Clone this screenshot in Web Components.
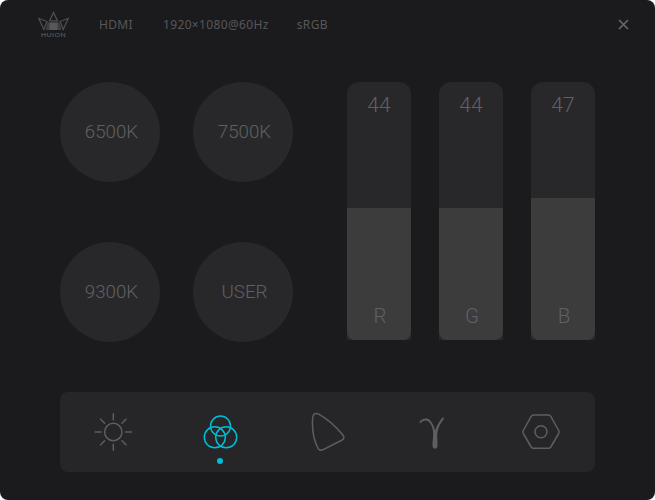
<!DOCTYPE html>
<html>
<head>
<meta charset="utf-8">
<style>
    html, body { margin: 0; padding: 0; background: #fff; }
</style>
</head>
<body>
<monitor-app></monitor-app>

<script>
class TopBar extends HTMLElement {
    constructor() {
        super();
        this.shadow = this.attachShadow({ mode: 'open' });
    }

    connectedCallback() {
        this.shadow.innerHTML = `
            <style>
                :host {
                    display: flex;
                    align-items: center;
                    height: 49px;
                    padding: 0 26px 0 38px;
                    font: 12px "Noto Sans", sans-serif;
                    letter-spacing: 0.35px;
                    color: #57575b;
                }
                svg.logo { width: 32px; height: 28px; margin-right: 29px; }
                span { margin-right: 30px; }
                span.last { margin-left: -2px; }
                svg.close { margin-left: auto; width: 11px; height: 11px; }
            </style>
            <svg class="logo" viewBox="0 0 32 28">
                <path d="M15.500 1.500 L11.500 9.800 H19.500 Z" fill="none" stroke="#505054" stroke-width="1.300"/>
                <path d="M0.800 7.500 L9 10.500 L5.800 18.500 Z M30.200 7.500 L22 10.500 L25.200 18.500 Z" fill="none" stroke="#505054" stroke-width="1.200"/>
                <path d="M9.500 11.500 H21.500 L23.500 19 H7.500 Z" fill="#3f3f43"/>
                <path d="M11.500 11.500 H19.500 V19 H11.500 Z" fill="#58585c"/>
                <text x="15.500" y="26" text-anchor="middle" font-family="'Liberation Sans'" font-size="5.500" fill="#66666a" textLength="25" lengthAdjust="spacingAndGlyphs">HUION</text>
            </svg>
            <span>HDMI</span>
            <span>1920×1080@60Hz</span>
            <span class="last">sRGB</span>
            <svg class="close" viewBox="0 0 11 11">
                <path d="M1 1 L10 10 M10 1 L1 10" stroke="#68686c" stroke-width="1.600"/>
            </svg>
        `;
    }
}

class PresetButton extends HTMLElement {
    constructor() {
        super();
        this.shadow = this.attachShadow({ mode: 'open' });
    }

    connectedCallback() {
        this.shadow.innerHTML = `
            <style>
                :host {
                    display: flex;
                    align-items: center;
                    justify-content: center;
                    width: 100px;
                    height: 100px;
                    padding-left: 3px;
                    box-sizing: border-box;
                    border-radius: 50%;
                    background: #28282a;
                    font: 300 18.700px "Roboto", sans-serif;
                    color: #606064;
                }
            </style>
            <slot></slot>
        `;
    }
}

class ChannelBar extends HTMLElement {
    constructor() {
        super();
        this.shadow = this.attachShadow({ mode: 'open' });
    }

    connectedCallback() {
        const fill = this.getAttribute('fill');
        const value = this.getAttribute('value');
        const name = this.getAttribute('name');
        this.shadow.innerHTML = `
            <style>
                :host {
                    display: flex;
                    flex-direction: column;
                    justify-content: flex-end;
                    position: relative;
                    width: 64px;
                    height: 258px;
                    border-radius: 12px 12px 0 0;
                    background: #28282a;
                    font: 300 21px "Roboto", sans-serif;
                    color: #606064;
                }
                .value {
                    position: absolute;
                    top: 11px;
                    left: 0;
                    right: 0;
                    text-align: center;
                    line-height: 25px;
                }
                .fill {
                    display: flex;
                    align-items: flex-end;
                    justify-content: center;
                    height: ${fill}px;
                    padding: 0 0 11px 2px;
                    box-sizing: border-box;
                    background: #3c3c3c;
                    border-radius: 0 0 8px 8px;
                    line-height: 25px;
                    font-size: 20.500px;
                }
            </style>
            <div class="value">${value}</div>
            <div class="fill">${name}</div>
        `;
    }
}

class NavBar extends HTMLElement {
    constructor() {
        super();
        this.shadow = this.attachShadow({ mode: 'open' });
    }

    connectedCallback() {
        this.shadow.innerHTML = `
            <style>
                :host {
                    display: grid;
                    grid-template-columns: repeat(5, 1fr);
                    width: 535px;
                    height: 80px;
                    box-sizing: border-box;
                    border-radius: 8px;
                    background: #262628;
                }
                .item {
                    position: relative;
                    display: flex;
                    align-items: center;
                    justify-content: center;
                }
                .dot {
                    position: absolute;
                    left: 50%;
                    top: 66px;
                    width: 6px;
                    height: 6px;
                    margin-left: -3.500px;
                    border-radius: 50%;
                    background: #00bcd4;
                }
                svg { width: 44px; height: 44px; fill: none; stroke: #5e5e62; stroke-width: 1.500; stroke-linecap: round; stroke-linejoin: round; }
                svg.on { stroke: #00bcd4; }
            </style>
            <div class="item">
                <svg viewBox="0 0 44 44">
                    <g transform="translate(-0.700 0)">
                        <circle cx="22" cy="22" r="8.700"/>
                        <path d="M22 3.800 V9.700 M22 34.300 V40.200 M3.800 22 H9.700 M34.300 22 H40.200 M9.300 9.300 L13.300 13.300 M30.700 30.700 L34.700 34.700 M9.300 34.700 L13.300 30.700 M30.700 13.300 L34.700 9.300"/>
                    </g>
                </svg>
            </div>
            <div class="item">
                <svg class="on" viewBox="0 0 44 44">
                    <circle cx="21.500" cy="16" r="10"/>
                    <circle cx="15.800" cy="27.300" r="10.500"/>
                    <circle cx="27.200" cy="27.300" r="10.500"/>
                </svg>
                <div class="dot"></div>
            </div>
            <div class="item">
                <svg viewBox="0 0 44 44">
                    <path transform="translate(-1.300 0)" d="M9.500 4.200 C7.800 5.500 7.500 9 7.800 15 C8 25 11 34 13.500 38.500 C14.500 40.500 16.500 40.500 18 39.800 L37.500 30 C39.800 29 39.500 26.500 38 24.800 C31 16.500 21 8 14 4.200 C12.500 3.200 10.800 3.200 9.500 4.200 Z"/>
                </svg>
            </div>
            <div class="item">
                <svg viewBox="0 0 44 44">
                    <path style="fill:#5e5e62;stroke:none" d="M6.300 12.200 C9 8.300 14 7.300 17.300 10.500 C19.800 13 21.300 17 22 20.500 C23.800 15.500 26.300 11 30 7 L31 8.800 C27.500 12.800 25 18 24.200 24 C24 28 24.800 32 24.500 36 C24.300 39.500 19.700 39.500 19.500 36 C19.300 31 20.700 26 20 21 C19.300 16.500 17.500 13 15 11.300 C12.500 9.700 9.500 10.700 7.500 13.200 Z"/>
                </svg>
            </div>
            <div class="item">
                <svg viewBox="0 0 44 44">
                    <g transform="translate(-0.500 0)">
                        <path d="M14 5 H29 Q30.500 5 31.300 6.300 L39.200 20.500 Q40 22 39.200 23.500 L31.300 37 Q30.500 38.300 29 38.300 H14 Q12.500 38.300 11.700 37 L3.800 23.500 Q3 22 3.800 20.500 L11.700 6.300 Q12.500 5 14 5 Z"/>
                        <circle cx="21.500" cy="21.700" r="6"/>
                    </g>
                </svg>
            </div>
        `;
    }
}

class MonitorApp extends HTMLElement {
    constructor() {
        super();
        this.shadow = this.attachShadow({ mode: 'open' });
    }

    connectedCallback() {
        this.shadow.innerHTML = `
            <style>
                :host {
                    display: block;
                    width: 655px;
                    height: 500px;
                    overflow: hidden;
                    box-sizing: border-box;
                    border-radius: 8px;
                    background: #1b1b1d;
                }
                .main {
                    display: flex;
                    justify-content: space-between;
                    padding: 33px 60px 0 60px;
                    height: 310px;
                }
                .presets {
                    display: grid;
                    grid-template-columns: 100px 100px;
                    grid-template-rows: 100px 100px;
                    column-gap: 33px;
                    row-gap: 60px;
                }
                .bars {
                    display: flex;
                    gap: 28px;
                }
                nav-bar { margin: 0 60px; }
            </style>
            <top-bar></top-bar>
            <div class="main">
                <div class="presets">
                    <preset-button>6500K</preset-button>
                    <preset-button>7500K</preset-button>
                    <preset-button>9300K</preset-button>
                    <preset-button>USER</preset-button>
                </div>
                <div class="bars">
                    <channel-bar name="R" value="44" fill="132"></channel-bar>
                    <channel-bar name="G" value="44" fill="132"></channel-bar>
                    <channel-bar name="B" value="47" fill="142"></channel-bar>
                </div>
            </div>
            <nav-bar></nav-bar>
        `;
    }
}

window.customElements.define('top-bar', TopBar);
window.customElements.define('preset-button', PresetButton);
window.customElements.define('channel-bar', ChannelBar);
window.customElements.define('nav-bar', NavBar);
window.customElements.define('monitor-app', MonitorApp);
</script>
</body>
</html>
